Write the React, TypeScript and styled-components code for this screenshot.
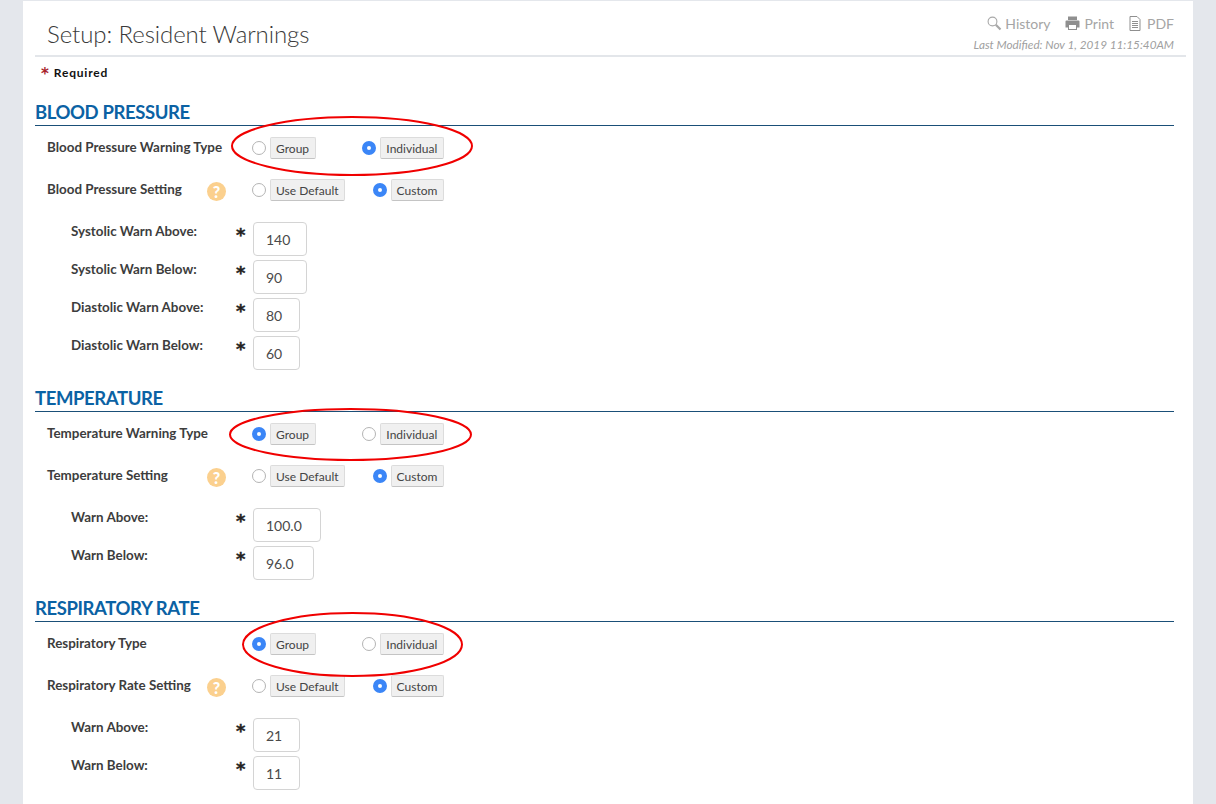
import React from "react";
import styled, { createGlobalStyle } from "styled-components";

const Global = createGlobalStyle`
  html, body { margin: 0; padding: 0; background: #e4e7ec; height: 804px; overflow: hidden; }
  body { font-family: Lato, "Liberation Sans", sans-serif; }
`;

const Panel = styled.main`
  position: relative;
  margin: 1px 0 0 23px;
  width: 1170px;
  height: 803px;
  background: #fff;
  box-sizing: border-box;
  padding: 0 19px 0 12px;
  overflow: hidden;
`;
const Header = styled.header`
  display: flex;
  justify-content: space-between;
  align-items: flex-start;
  height: 54px;
  border-bottom: 2px solid #e3e6ea;
  margin-right: -12px;
  padding-right: 12px;
`;
const Title = styled.h1`
  margin: 18px 0 0 12px;
  font-size: 24px;
  line-height: 30px;
  font-weight: 300;
  letter-spacing: -0.09px;
  color: #3a3a3a;
`;
const Tools = styled.div`
  display: flex;
  flex-direction: column;
  align-items: flex-end;
  padding-top: 12px;
`;
const ToolRow = styled.div`
  display: flex;
  gap: 14px;
  height: 20px;
`;
const Tool = styled.span`
  display: flex;
  align-items: center;
  gap: 3px;
  font-size: 14px;
  color: #a5a5a5;
`;
const Modified = styled.div`
  font-size: 11.75px;
  font-style: italic;
  color: #a0a0a0;
  line-height: 16px;
  margin-top: 4px;
`;
const Required = styled.div`
  display: flex;
  align-items: center;
  gap: 5px;
  margin: 7px 0 0 6px;
  height: 16px;
  font-size: 12px;
  font-weight: 700;
  color: #111;
  letter-spacing: 0.8px;
`;
const RedStar = styled.span`
  color: #a8232a;
  font-size: 15px;
  font-weight: 700;
  line-height: 16px;
  letter-spacing: 0;
  font-family: "DejaVu Sans", sans-serif;
  position: relative;
  top: 2px;
`;
const Section = styled.section<{ $top: number }>`
  margin-top: ${(p) => p.$top}px;
`;
const Heading = styled.h2`
  margin: 0;
  height: 25px;
  line-height: 25px;
  font-size: 18.5px;
  font-weight: 700;
  color: #0b62a4;
  border-bottom: 1px solid #1a4f78;
  letter-spacing: -0.4px;
  text-transform: uppercase;
`;
const Row = styled.div`
  position: relative;
  display: flex;
  align-items: center;
  height: 22px;
  margin-top: 20px;
  &:first-of-type { margin-top: 11px; }
`;
const RowLabel = styled.div`
  display: flex;
  align-items: center;
  width: 217px;
  padding-left: 12px;
  box-sizing: border-box;
  font-size: 13.4px;
  font-weight: 700;
  color: #3d3d3d;
  position: relative;
  top: -1px;
`;
const LabelText = styled.span<{ $w?: number }>`
  ${(p) => (p.$w ? `width: ${p.$w}px;` : "")}
  white-space: nowrap;
`;
const Help = styled.span`
  width: 19px;
  height: 19px;
  border-radius: 50%;
  background: #fbd08e;
  color: #fff;
  display: flex;
  align-items: center;
  justify-content: center;
  font-size: 16px;
  font-weight: 900;
  position: relative;
  top: 2px;
`;
const Options = styled.div`
  display: flex;
  justify-content: space-between;
  width: 192px;
`;
const Option = styled.label`
  display: flex;
  align-items: center;
  gap: 4px;
`;
const Radio = styled.span<{ $on?: boolean }>`
  box-sizing: border-box;
  width: 14px;
  height: 14px;
  border-radius: 50%;
  background: #fff;
  border: ${(p) => (p.$on ? "5px solid #3b86f7" : "1px solid #b4b4b4")};
`;
const OptButton = styled.span`
  box-sizing: border-box;
  height: 22px;
  padding: 0 5.6px 0 5px;
  display: flex;
  align-items: center;
  font-size: 12px;
  letter-spacing: 0.02px;
  color: #444;
  background: #f0f0f0;
  border: 1px solid #dcdcdc;
  border-bottom: 1px solid #c4c4c4;
  border-radius: 2px;
`;
const Fields = styled.div`
  display: flex;
  flex-direction: column;
  gap: 4px;
  margin-top: 21px;
`;
const Field = styled.div`
  display: flex;
  align-items: center;
  height: 34px;
`;
const FieldLabel = styled.div`
  width: 165px;
  margin-left: 36px;
  font-size: 13.4px;
  font-weight: 700;
  color: #3d3d3d;
  position: relative;
  top: -8px;
`;
const Star = styled.span`
  width: 17px;
  font-size: 18px;
  font-weight: 700;
  font-family: "DejaVu Sans", sans-serif;
  -webkit-text-stroke: 0.4px #222;
  color: #222;
  position: relative;
  top: -5px;
`;
const Input = styled.div<{ $w: number }>`
  box-sizing: border-box;
  width: ${(p) => p.$w}px;
  height: 34px;
  border: 1px solid #d4d4d4;
  border-radius: 4px;
  padding: 1px 0 0 12px;
  display: flex;
  align-items: center;
  font-size: 14px;
  color: #4a4a4a;
`;
const Oval = styled.svg<{ $x: number; $y: number; $w: number; $h: number }>`
  position: absolute;
  left: ${(p) => p.$x}px;
  top: ${(p) => p.$y}px;
  width: ${(p) => p.$w}px;
  height: ${(p) => p.$h}px;
  overflow: visible;
  pointer-events: none;
`;

const Ellipse = ({ x, y, w, h }: { x: number; y: number; w: number; h: number }) => (
  <Oval $x={x} $y={y} $w={w} $h={h} viewBox={`0 0 ${w} ${h}`} fill="none">
    <ellipse cx={w / 2} cy={h / 2} rx={w / 2 - 1} ry={h / 2 - 1} stroke="#f00000" strokeWidth="2" />
  </Oval>
);

const OptionPair = ({ a, b, on }: { a: string; b: string; on: 0 | 1 }) => (
  <Options>
    <Option>
      <Radio $on={on === 0} />
      <OptButton>{a}</OptButton>
    </Option>
    <Option>
      <Radio $on={on === 1} />
      <OptButton>{b}</OptButton>
    </Option>
  </Options>
);

const HelpIcon = () => <Help>?</Help>;

type S = {
  title: string;
  top: number;
  typeLabel: string;
  on: 0 | 1;
  settingLabel: string;
  settingW: number;
  oval: { x: number; y: number; w: number; h: number };
  fields: [string, string, number][];
};

const sections: S[] = [
  {
    title: "Blood Pressure",
    top: 20,
    typeLabel: "Blood Pressure Warning Type",
    on: 1,
    settingLabel: "Blood Pressure Setting",
    settingW: 160,
    oval: { x: 208, y: 115, w: 242, h: 60 },
    fields: [
      ["Systolic Warn Above:", "140", 54],
      ["Systolic Warn Below:", "90", 54],
      ["Diastolic Warn Above:", "80", 47],
      ["Diastolic Warn Below:", "60", 47],
    ],
  },
  {
    title: "Temperature",
    top: 16,
    typeLabel: "Temperature Warning Type",
    on: 0,
    settingLabel: "Temperature Setting",
    settingW: 160,
    oval: { x: 206, y: 407, w: 243, h: 53 },
    fields: [
      ["Warn Above:", "100.0", 68],
      ["Warn Below:", "96.0", 61],
    ],
  },
  {
    title: "Respiratory Rate",
    top: 16,
    typeLabel: "Respiratory Type",
    on: 0,
    settingLabel: "Respiratory Rate Setting",
    settingW: 160,
    oval: { x: 219, y: 611, w: 221, h: 65 },
    fields: [
      ["Warn Above:", "21", 47],
      ["Warn Below:", "11", 47],
    ],
  },
];

export default function App() {
  return (
    <>
      <Global />
      <Panel>
        <Header>
          <Title>Setup: Resident Warnings</Title>
          <Tools>
            <ToolRow>
              <Tool>
                <svg width="15" height="15" viewBox="0 0 15 15" fill="none" stroke="#a8a8a8">
                  <circle cx="5.5" cy="5.5" r="4.4" strokeWidth="1.1" />
                  <path d="M8.8 8.8 L13.5 13.5" strokeWidth="2.2" />
                </svg>
                History
              </Tool>
              <Tool>
                <svg width="17" height="14" viewBox="0 0 17 14" fill="#8f8f8f">
                  <path d="M3 0.5h9v3.5H3z" />
                  <path d="M1.5 4.5h12a1 1 0 0 1 1 1v6h-14v-6a1 1 0 0 1 1-1z" />
                  <rect x="3.5" y="8.5" width="8" height="5" fill="#fff" stroke="#8f8f8f" />
                </svg>
                Print
              </Tool>
              <Tool>
                <svg width="16" height="15" viewBox="1 0 16 15" fill="none" stroke="#8f8f8f" strokeWidth="1">
                  <path d="M3 .5h7l3 3v11H3z" />
                  <path d="M5 5.5h6M5 7.5h6M5 9.5h6M5 11.5h6" />
                </svg>
                PDF
              </Tool>
            </ToolRow>
            <Modified>Last Modified: Nov 1, 2019 11:15:40AM</Modified>
          </Tools>
        </Header>
        <Required>
          <RedStar>*</RedStar>
          Required
        </Required>
        {sections.map((s) => (
          <Section key={s.title} $top={s.top}>
            <Heading>{s.title}</Heading>
            <Row>
              <RowLabel>
                <LabelText>{s.typeLabel}</LabelText>
              </RowLabel>
              <OptionPair a="Group" b="Individual" on={s.on} />
            </Row>
            <Row>
              <RowLabel>
                <LabelText $w={s.settingW}>{s.settingLabel}</LabelText>
                <HelpIcon />
              </RowLabel>
              <OptionPair a="Use Default" b="Custom" on={1} />
            </Row>
            <Fields>
              {s.fields.map(([l, v, w]) => (
                <Field key={l}>
                  <FieldLabel>{l}</FieldLabel>
                  <Star>*</Star>
                  <Input $w={w}>{v}</Input>
                </Field>
              ))}
            </Fields>
            <Ellipse {...s.oval} />
          </Section>
        ))}
      </Panel>
    </>
  );
}
